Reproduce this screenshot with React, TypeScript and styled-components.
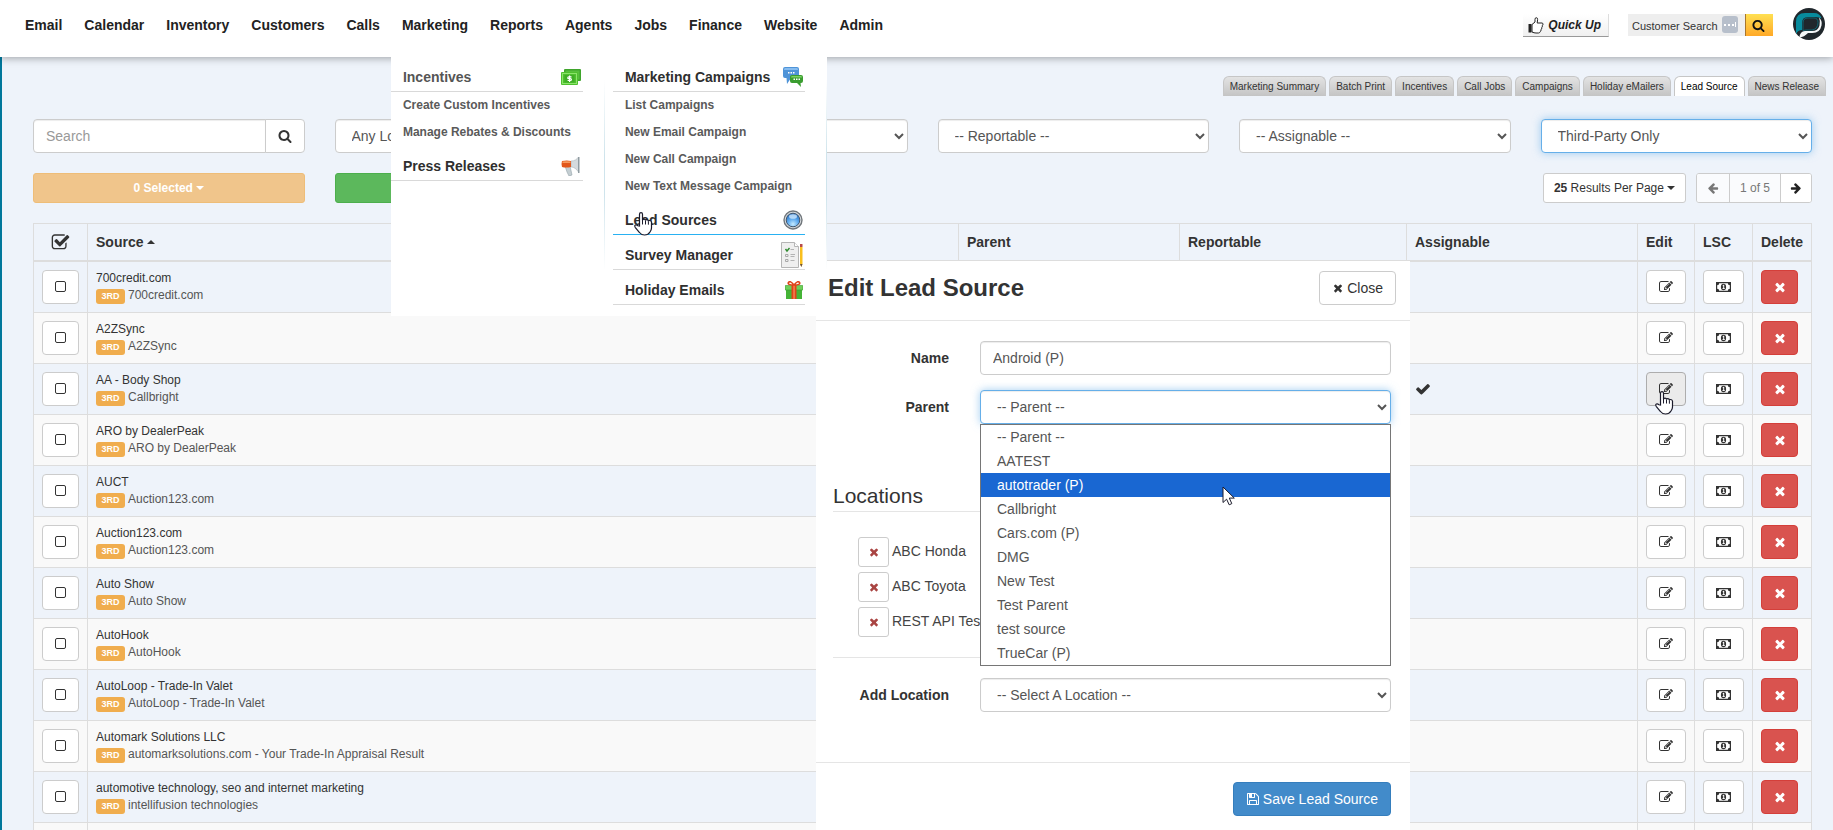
import React from "react";
import styled, { createGlobalStyle, css } from "styled-components";

const GlobalStyle = createGlobalStyle`
  *, *::before, *::after { box-sizing: border-box; }
  body {
    margin: 0;
    background: #eef3fa;
    color: #333;
    font: 14px/20px "Liberation Sans", Arial, Helvetica, sans-serif;
  }
  button, input, select { font: inherit; color: inherit; margin: 0; }
  a { color: inherit; text-decoration: none; }
`;

/* ---------- icons ---------- */

const paths = {
  times:
    "M1490 1322q0 40-28 68l-136 136q-28 28-68 28t-68-28l-294-294-294 294q-28 28-68 28t-68-28l-136-136q-28-28-28-68t28-68l294-294-294-294q-28-28-28-68t28-68l136-136q28-28 68-28t68 28l294 294 294-294q28-28 68-28t68 28l136 136q28 28 28 68t-28 68l-294 294 294 294q28 28 28 68z",
  check:
    "M1671 566q0 40-28 68l-724 724-136 136q-28 28-68 28t-68-28l-136-136-362-362q-28-28-28-68t28-68l136-136q28-28 68-28t68 28l294 295 656-657q28-28 68-28t68 28l136 136q28 28 28 68z",
  search:
    "M1216 832q0-185-131.5-316.5t-316.5-131.5-316.5 131.5-131.5 316.5 131.5 316.5 316.5 131.5 316.5-131.5 131.5-316.5zm512 832q0 52-38 90t-90 38q-54 0-90-38l-343-342q-179 124-399 124-143 0-273.5-55.5t-225-150-150-225-55.5-273.5 55.5-273.5 150-225 225-150 273.5-55.5 273.5 55.5 225 150 150 225 55.5 273.5q0 220-124 399l343 343q37 37 37 90z",
  arrow:
    "M1600 960q0 54-37 91l-651 651q-39 37-91 37-51 0-90-37l-75-75q-38-38-38-91t38-91l293-293h-704q-52 0-84.500-37.500t-32.500-90.500v-128q0-53 32.500-90.500t84.500-37.500h704l-293-294q-38-36-38-90t38-90l75-75q38-38 90-38 53 0 91 38l651 651q37 35 37 90z",
  save:
    "M512 1536h768v-384h-768v384zm896 0h128v-896q0-14-10-38.500t-20-34.500l-281-281q-10-10-34-20t-39-10v416q0 40-28 68t-68 28h-576q-40 0-68-28t-28-68v-416h-128v1280h128v-416q0-40 28-68t68-28h832q40 0 68 28t28 68v416zm-384-928v-320q0-13-9.500-22.500t-22.500-9.500h-192q-13 0-22.500 9.500t-9.500 22.500v320q0 13 9.500 22.500t22.500 9.500h192q13 0 22.500-9.500t9.500-22.500zm640 32v928q0 40-28 68t-68 28h-1344q-40 0-68-28t-28-68v-1344q0-40 28-68t68-28h928q40 0 88 20t76 48l280 280q28 28 48 76t20 88z",
  edit:
    "M888 1184l116-116-152-152-116 116v56h96v96h56zm440-720q-16-16-33 1l-350 350q-17 17-1 33t33-1l350-350q17-17 1-33zm80 594v190q0 119-84.500 203.500t-203.500 84.500h-832q-119 0-203.500-84.500t-84.500-203.500v-832q0-119 84.500-203.500t203.500-84.500h832q63 0 117 25 15 7 18 23 3 17-9 29l-49 49q-14 14-32 8-23-6-45-6h-832q-66 0-113 47t-47 113v832q0 66 47 113t113 47h832q66 0 113-47t47-113v-126q0-13 9-22l64-64q15-15 35-7t20 29zm-96-738l288 288-672 672h-288v-288zm444 132l-92 92-288-288 92-92q28-28 68-28t68 28l152 152q28 28 28 68t-28 68z",
  checkSquare:
    "M1472 930v318q0 119-84.500 203.500t-203.500 84.500h-832q-119 0-203.500-84.500t-84.500-203.500v-832q0-119 84.500-203.500t203.500-84.500h832q63 0 117 25 15 7 18 23 3 17-9 29l-49 49q-10 10-23 10-3 0-9-2-23-6-45-6h-832q-66 0-113 47t-47 113v832q0 66 47 113t113 47h832q66 0 113-47t47-113v-254q0-13 9-22l64-64q10-10 23-10 6 0 12 3 20 8 20 29zm231-489l-814 814q-24 24-57 24t-57-24l-430-430q-24-24-24-57t24-57l110-110q24-24 57-24t57 24l263 263 647-647q24-24 57-24t57 24l110 110q24 24 24 57t-24 57z",
};

const Svg = styled.svg`
  display: block;
  flex: none;
`;

const Icon = ({ name, size = 14, flip }: { name: keyof typeof paths; size?: number; flip?: boolean }) => (
  <Svg width={size} height={size} viewBox="0 0 1792 1792" fill="currentColor" aria-hidden="true">
    <path d={paths[name]} transform={flip ? "translate(1792 0) scale(-1 1)" : undefined} />
  </Svg>
);

const MoneyIcon = () => (
  <Svg width="15" height="10" viewBox="0 0 15 10" aria-hidden="true">
    <path
      fill="#333"
      fillRule="evenodd"
      d="M0 0h15v10H0zM3.200 1.200A2 2 0 0 1 1.200 3.200v3.600a2 2 0 0 1 2 2h8.600a2 2 0 0 1 2-2V3.200a2 2 0 0 1-2-2z"
    />
    <ellipse cx="7.500" cy="5" rx="2.600" ry="3.200" fill="#333" />
    <path d="M6.600 3.600l1-.9h.6v3.600h.7v.8H6.400v-.8h.8V4l-.4.300z" fill="#fff" />
  </Svg>
);

const CashIcon = () => (
  <Svg width="20" height="16" viewBox="0 0 20 16" aria-hidden="true">
    <rect x="3" y="0" width="17" height="12" rx="1" fill="#3fa52c" />
    <rect x="4.500" y="1.500" width="14" height="9" fill="#58bf3d" />
    <rect x="0" y="3" width="17" height="13" rx="1" fill="#4fc02f" />
    <rect x="1.500" y="4.500" width="14" height="10" fill="none" stroke="#8be46a" />
    <rect x="3.500" y="6" width="10" height="7.500" fill="#3fae26" />
    <path d="M10.500 7.900H7.700q-.9 0-.9.900t.9.900h1.800q.9 0 .9.900t-.9.900H6.600M8.600 6.500v6.500" fill="none" stroke="#fff" strokeWidth="1.200" />
  </Svg>
);

const MegaphoneIcon = () => (
  <Svg width="20" height="19" viewBox="0 0 20 19" aria-hidden="true">
    <path d="M4 9h5l2 9-3 1-2-4z" fill="#c4ced2" stroke="#94a3aa" strokeWidth=".6" />
    <path d="M10 4c4 0 6-2 7.500-4v15c-2-3-4.500-5-7.500-5z" fill="#d4dadd" stroke="#a1abb0" strokeWidth=".5" />
    <path d="M17 0h1.500v16H17z" fill="#8f9ba1" />
    <path d="M1 4q5-1 9 0v6q-5 1-9 0-1-3 0-6z" fill="#e2571b" />
    <path d="M1.500 4.600q4-.9 8 0v1.400h-8z" fill="#f59b60" />
  </Svg>
);

const ChatIcon = () => (
  <Svg width="20" height="20" viewBox="0 0 20 20" aria-hidden="true">
    <path d="M2 0h12q2 0 2 2v7q0 2-2 2H8l-4 6-.5-6H2q-2 0-2-2V2q0-2 2-2z" fill="#4f94d8" />
    <path d="M2 1h12q1 0 1 2H1q0-2 1-2z" fill="#86bcf0" />
    <path d="M5 5h1.500v1.500H5zm2.500 0H9v1.500H7.500zM10 5h1.500v1.500H10z" fill="#fff" />
    <path d="M9 8h9q2 0 2 2v4q0 2-2 2h-.5l.5 4-4-4H9q-2 0-2-2v-4q0-2 2-2z" fill="#3a9d30" />
    <path d="M9 9h9q1 0 1 1.500H8Q8 9 9 9z" fill="#7bd264" />
    <path d="M10.500 11.500H12V13h-1.500zm2.500 0h1.500V13H13zm2.500 0H17V13h-1.500z" fill="#fff" />
  </Svg>
);

const OrbIcon = () => (
  <Svg width="20" height="20" viewBox="0 0 20 20" aria-hidden="true">
    <defs>
      <radialGradient id="orb" cx="50%" cy="80%" r="80%">
        <stop offset="0" stopColor="#c4eaff" />
        <stop offset=".5" stopColor="#5ba8ee" />
        <stop offset="1" stopColor="#2468b8" />
      </radialGradient>
    </defs>
    <circle cx="10" cy="10" r="9" fill="#d9dde0" stroke="#70767b" strokeWidth="1.400" />
    <circle cx="10" cy="10" r="6.800" fill="url(#orb)" stroke="#41566c" />
    <ellipse cx="10" cy="6.500" rx="4" ry="2.300" fill="#d7edff" opacity=".75" />
  </Svg>
);

const SurveyIcon = () => (
  <Svg width="22" height="26" viewBox="0 0 22 26" aria-hidden="true">
    <path d="M.5.500h13l4 4v21H.5z" fill="#efefef" stroke="#b5b5b5" />
    <path d="M13.500.500v4h4" fill="#fff" stroke="#b5b5b5" />
    <path d="M4.500 7l1.500 2 2.500-3" fill="none" stroke="#2f8a2f" strokeWidth="1.400" />
    <path d="M9.500 7.500h3.500M9.500 12.500h4.500M9.500 14.500h4M9.500 18.500h4" stroke="#b3b3b3" />
    <path d="M4.500 12.500h2.500v2H4.500zm0 5h2.500v2H4.500z" fill="none" stroke="#a8a8a8" />
    <path d="M19 5h2.500v17l-1.200 3L19 22z" fill="#f9bf1e" />
    <path d="M19 2h2.500v3H19z" fill="#b74a4a" />
    <path d="M19 22h2.500l-1.200 3z" fill="#6a5140" />
  </Svg>
);

const GiftIcon = () => (
  <Svg width="18" height="18" viewBox="0 0 18 18" aria-hidden="true">
    <rect x="1" y="8" width="16" height="10" fill="#45b437" />
    <rect x="0" y="4.500" width="18" height="4.500" rx=".5" fill="#6fcf5a" stroke="#3a9a30" strokeWidth=".6" />
    <rect x="6.500" y="4" width="5" height="14" fill="#e0431a" />
    <rect x="8.300" y="4" width="1.500" height="14" fill="#f5824f" />
    <path d="M9 4Q5-1 3.500 1.500T9 4q4-5 5.500-2.500T9 4z" fill="none" stroke="#e0431a" strokeWidth="1.600" />
  </Svg>
);

const ThumbIcon = () => (
  <Svg width="16" height="17" viewBox="0 0 16 17" aria-hidden="true">
    <path d="M.5 7h3v8.500h-3z" fill="#222" />
    <path
      d="M4 7.500L7 5V2.500Q7 .7 8.300.7T9.600 2.500L9.200 6H14q1 0 1 1.200t-.8 1.300q.5 1.800-.5 2.200.3 1.500-.7 2 .2 1.600-.8 1.900-.4 1.400-1.700 1.400H8q-2 0-4-1z"
      fill="#fff"
      stroke="#222"
    />
  </Svg>
);

const BrandMark = () => (
  <Svg width="32" height="32" viewBox="0 0 32 32" role="img" aria-label="Account">
    <circle cx="16" cy="16" r="16" fill="#20272c" />
    <path d="M3 26V13.500Q3 5 12 5h9q6 0 7.500 5.500-2-1.500-6-1.500H15q-6 0-6 6v7q-4 0-6 4z" fill="#078b9d" />
    <path d="M26 9.500q3.500 3 2.500 8-1.500 7.500-9 7.500H15q-4 4-8.500 4.500Q7 23 12 23h7q6 0 7.500-5.500Q27.500 13 26 9.500z" fill="#f4f7f8" />
    <path d="M10 22.500V15q0-5 5-5h6q4 0 4 4.500Q25 21 19 22h-6z" fill="#20272c" stroke="#078b9d" strokeWidth=".6" />
  </Svg>
);

const HandSvg = styled.svg<{ $left: number; $top: number }>`
  position: absolute;
  left: ${(p) => p.$left}px;
  top: ${(p) => p.$top}px;
  pointer-events: none;
`;

const HandCursor = ({ left, top }: { left: number; top: number }) => (
  <HandSvg $left={left} $top={top} width="19" height="24" viewBox="0 0 19 24" aria-hidden="true">
    <path
      d="M5.500 14V2.300q0-1.600 1.500-1.600t1.500 1.600V8.200q0-1 1.500-1t1.500 1.300q0-.8 1.400-.8t1.500 1.500q0-.7 1.300-.7t1.800 1.700V16q0 2-1.500 4-1.800 3-5.500 3-3.200 0-5-2.500L1.200 15.300q-1-1.700.2-2.300t2.600.8z"
      fill="#fff"
      stroke="#1b1b2b"
      strokeWidth="1.200"
    />
    <path d="M8.500 8v4.500M11.500 8.500v4M14.400 9.200v3.500" stroke="#1b1b2b" fill="none" />
  </HandSvg>
);

const PointerSvg = styled.svg`
  position: absolute;
  left: 241px;
  top: 13px;
  z-index: 1;
  pointer-events: none;
`;

/* ---------- header ---------- */

const Page = styled.div`
  position: relative;
  display: flex;
  flex-direction: column;
  height: 100vh;
  overflow: hidden;
`;

const Header = styled.header`
  position: relative;
  z-index: 3;
  display: flex;
  flex: none;
  justify-content: space-between;
  height: 57px;
  padding: 0 8px 0 25px;
  background: #fff;
  box-shadow: 0 1px 8px rgba(0, 0, 0, 0.35);
`;

const NavList = styled.ul`
  display: flex;
  gap: 22px;
  margin: 0;
  padding: 0;
  list-style: none;
  font-weight: bold;
  color: #222;
`;

const NavItem = styled.li`
  position: relative;
  padding-top: 15px;
`;

const HeaderTools = styled.div`
  display: flex;
  align-items: flex-start;
  padding-top: 8px;
`;

const QuickUp = styled.button`
  display: flex;
  align-items: center;
  gap: 4px;
  height: 23px;
  margin: 6px 19px 0 0;
  padding: 0 7px 0 5px;
  border: 0;
  border-bottom: 1px solid #999;
  border-right: 1px solid #ddd;
  background: linear-gradient(#fff, #f0f0f0);
  color: #222;
  font-size: 12px;
  font-weight: bold;
  font-style: italic;
`;

const CustomerSearch = styled.form`
  display: flex;
  height: 22px;
  margin: 6px 20px 0 0;
  background: #eee;
`;

const CustomerInput = styled.input`
  width: 94px;
  padding: 2px 0 0 4px;
  border: 0;
  background: none;
  font-size: 11px;
  &::placeholder { color: #333; opacity: 1; }
`;

const FillBadge = styled.span`
  display: flex;
  align-items: center;
  justify-content: center;
  width: 16px;
  height: 17px;
  margin: 2px 7px 0 0;
  border-radius: 3px;
  background: #b7bfcb;
`;

const YellowButton = styled.button`
  display: flex;
  align-items: center;
  justify-content: center;
  width: 28px;
  padding: 0 2px 0 0;
  border: 0;
  border-left: 1px solid #a8762c;
  background: linear-gradient(#ffe052, #ffa928);
  color: #111;
`;

/* ---------- mega menu ---------- */

const MegaMenu = styled.div`
  position: absolute;
  top: 57px;
  left: -11px;
  display: flex;
  align-items: flex-start;
  height: 259px;
  background: #fff;
`;

const MenuColumn = styled.div`
  flex: none;
  width: 192px;
`;

const MenuRule = styled.i`
  flex: none;
  width: 1px;
  height: 190px;
  margin: 23px 0 0 21px;
  background: linear-gradient(#fff, #cfe4ec 40%, #cfe4ec 60%, #fff);
  & + ${MenuColumn} { margin-left: 8px; }
`;

const MenuHeading = styled.a<{ $active?: boolean; $muted?: boolean }>`
  position: relative;
  display: flex;
  align-items: center;
  justify-content: space-between;
  height: 35px;
  padding: 6px 2px 0 12px;
  border-bottom: 1px solid ${(p) => (p.$active ? "#29b1f2" : "#d9d9d9")};
  color: ${(p) => (p.$muted ? "#555" : "#2f2f2f")};
`;

const MenuLink = styled.a`
  display: block;
  padding-left: 12px;
  color: #5a5a5a;
  font-size: 12px;
  line-height: 27px;
`;

/* ---------- controls ---------- */

const fieldBase = css<{ $focused?: boolean }>`
  width: 100%;
  height: 34px;
  padding: 6px 12px;
  border: 1px solid ${(p) => (p.$focused ? "#66afe9" : "#ccc")};
  border-radius: 4px;
  outline: none;
  background-color: #fff;
  color: #555;
  box-shadow: inset 0 1px 1px rgba(0, 0, 0, 0.075)
    ${(p) => (p.$focused ? ", 0 0 8px rgba(102, 175, 233, 0.6)" : "")};
`;

const TextField = styled.input<{ $focused?: boolean }>`
  ${fieldBase}
  &::placeholder { color: #999; opacity: 1; }
`;

const SelectField = styled.select<{ $focused?: boolean }>`
  ${fieldBase}
`;

const tones = {
  plain: css`background: #fff; border-color: #ccc; color: #333;`,
  pressed: css`background: #ebebeb; border-color: #adadad; color: #333;`,
  danger: css`background: #d9534f; border-color: #d43f3a; color: #fff;`,
  primary: css`background: #428bca; border-color: #357ebd; color: #fff;`,
  success: css`background: #5cb85c; border-color: #4cae4c; color: #fff;`,
  faded: css`background: #f0c58b; border-color: #eebd78; color: #fff;`,
};

const Button = styled.button<{ $tone?: keyof typeof tones; $small?: boolean; $width?: number }>`
  position: relative;
  display: flex;
  flex: none;
  align-items: center;
  justify-content: center;
  gap: 3px;
  width: ${(p) => (p.$width ? `${p.$width}px` : "auto")};
  height: ${(p) => (p.$small ? 30 : 34)}px;
  padding: 0 ${(p) => (p.$width ? 0 : p.$small ? 10 : 12)}px;
  border: 1px solid;
  border-radius: ${(p) => (p.$small ? 3 : 4)}px;
  font-size: ${(p) => (p.$small ? 12 : 14)}px;
  white-space: nowrap;
  ${(p) => tones[p.$tone ?? "plain"]}
`;

const Caret = styled.i<{ $up?: boolean }>`
  border: 4px solid transparent;
  ${(p) =>
    p.$up
      ? "border-top: 0; border-bottom-color: currentColor;"
      : "border-bottom: 0; border-top-color: currentColor;"}
`;

/* ---------- main area ---------- */

const Main = styled.main`
  flex: 1;
  padding-top: 19px;
  border-left: 2px solid #00779b;
`;

const Tabs = styled.nav`
  display: flex;
  justify-content: flex-end;
  gap: 3px;
  padding-right: 7px;
`;

const Tab = styled.a<{ $active?: boolean }>`
  height: 20px;
  padding: 0 6px;
  border: 1px solid #c6c6c6;
  border-bottom: 0;
  border-radius: 6px 6px 0 0;
  background: ${(p) => (p.$active ? "#fff" : "linear-gradient(#e3e3e3, #c4c4c4)")};
  color: ${(p) => (p.$active ? "#000" : "#333")};
  font-size: 10px;
  line-height: 20px;
`;

const Content = styled.div`
  display: flex;
  flex-direction: column;
  gap: 20px;
  padding: 23px 21px 0 31px;
`;

const Columns = styled.div`
  display: grid;
  grid-template-columns: repeat(6, 1fr);
  column-gap: 30px;
`;

const SearchGroup = styled.form`
  display: flex;
  input { border-radius: 4px 0 0 4px; }
  button { margin-left: -1px; border-radius: 0 4px 4px 0; }
`;

const Paging = styled.div`
  grid-column: 3 / -1;
  display: flex;
  justify-content: flex-end;
  gap: 10px;
`;

const Pager = styled.div`
  display: flex;
  border: 1px solid #ccc;
  border-radius: 3px;
  background: #fff;
  overflow: hidden;
  font-size: 12px;
`;

const PagerStep = styled.button<{ $muted?: boolean }>`
  display: flex;
  align-items: center;
  justify-content: center;
  width: ${(p) => (p.$muted ? 32 : 30)}px;
  padding: 0;
  border: 0;
  background: ${(p) => (p.$muted ? "#fafbfd" : "#fff")};
  color: ${(p) => (p.$muted ? "#777" : "#222")};
`;

const PagerCount = styled.span`
  padding: 0 10px;
  border: solid #ccc;
  border-width: 0 1px;
  background: #fafbfd;
  color: #777;
  line-height: 28px;
`;

const Table = styled.table`
  width: 100%;
  table-layout: fixed;
  border-spacing: 0;
  border-top: 1px solid #ddd;
  border-left: 1px solid #ddd;
`;

const Th = styled.th<{ $width?: number }>`
  width: ${(p) => (p.$width ? `${p.$width}px` : "auto")};
  height: 38px;
  padding: 0 8px;
  border-right: 1px solid #ddd;
  border-bottom: 2px solid #ddd;
  text-align: left;
  white-space: nowrap;
`;

const HeadLabel = styled.span<{ $center?: boolean }>`
  display: flex;
  align-items: center;
  justify-content: ${(p) => (p.$center ? "center" : "flex-start")};
  gap: 4px;
`;

const Tr = styled.tr`
  height: 51px;
  &:nth-child(even) { background: #f9f9f9; }
`;

const Td = styled.td`
  padding: 8px;
  border-right: 1px solid #ddd;
  border-bottom: 1px solid #ddd;
  font-size: 12px;
  line-height: 17px;
  vertical-align: top;
`;

const TickBox = styled.label`
  display: flex;
  align-items: center;
  justify-content: center;
  width: 37px;
  height: 34px;
  padding-bottom: 1px;
  border: 1px solid #ccc;
  border-radius: 4px;
  background: #fff;
`;

const Tick = styled.input`
  appearance: none;
  width: 11px;
  height: 11px;
  border: 1px solid #333;
  border-radius: 2px;
`;

const SourceName = styled.a`
  display: block;
  color: #333;
`;

const SourceAlias = styled.div`
  display: flex;
  gap: 3px;
  color: #555;
  white-space: nowrap;
`;

const PartyBadge = styled.span`
  align-self: flex-end;
  width: 29px;
  height: 15px;
  border-radius: 3px;
  background: #f0ad4e;
  color: #fff;
  font-size: 9px;
  font-weight: bold;
  line-height: 14px;
  text-align: center;
`;

const CheckCell = styled.span`
  display: flex;
  align-items: center;
  height: 34px;
`;

/* ---------- dialog ---------- */

const Dialog = styled.section`
  position: absolute;
  z-index: 2;
  top: 261px;
  bottom: 0;
  left: 816px;
  width: 594px;
  background: #fff;
`;

const DialogHeader = styled.header`
  display: flex;
  justify-content: space-between;
  padding: 10px 14px 15px 12px;
  border-bottom: 1px solid #e5e5e5;
`;

const DialogTitle = styled.h2`
  margin: 0;
  font-size: 24px;
  line-height: 34px;
`;

const DialogBody = styled.div`
  display: flex;
  flex-direction: column;
  gap: 15px;
  padding: 20px 19px 50px 17px;
`;

const FormRow = styled.div`
  display: grid;
  grid-template-columns: 116px 1fr;
  column-gap: 31px;
  align-items: center;
`;

const FormLabel = styled.label`
  font-weight: bold;
  text-align: right;
`;

const Control = styled.div`
  position: relative;
`;

const Options = styled.ul`
  position: absolute;
  z-index: 1;
  top: 34px;
  left: 0;
  right: 0;
  margin: 0;
  padding: 0;
  border: 1px solid #767676;
  background: #fff;
  list-style: none;
`;

const Option = styled.li<{ $active?: boolean }>`
  position: relative;
  padding: 0 16px;
  background: ${(p) => (p.$active ? "#1967d2" : "#fff")};
  color: ${(p) => (p.$active ? "#fff" : "#555")};
  line-height: 24px;
`;

const Locations = styled.fieldset`
  margin: 42px 0 5px;
  padding: 0 0 20px;
  border: 0;
  border-bottom: 1px solid #e5e5e5;
`;

const Legend = styled.legend`
  width: 100%;
  padding: 0;
  border-bottom: 1px solid #e5e5e5;
  font-size: 21px;
  line-height: 30px;
`;

const LocationList = styled.ul`
  display: flex;
  flex-direction: column;
  gap: 5px;
  margin: 25px 0 0 25px;
  padding: 0;
  list-style: none;
`;

const LocationItem = styled.li`
  display: flex;
  gap: 3px;
  line-height: 28px;
  color: #444;
`;

const RemoveMark = styled.span`
  color: #a94442;
`;

const DialogFooter = styled.footer`
  display: flex;
  justify-content: flex-end;
  padding: 19px 19px 14px;
  border-top: 1px solid #e5e5e5;
`;

/* ---------- data ---------- */

const nav = ["Email", "Calendar", "Inventory", "Customers", "Calls", "Marketing", "Reports", "Agents", "Jobs", "Finance", "Website", "Admin"];

const tabs = ["Marketing Summary", "Batch Print", "Incentives", "Call Jobs", "Campaigns", "Holiday eMailers", "Lead Source", "News Release"];

const sources: [string, string][] = [
  ["700credit.com", "700credit.com"],
  ["A2ZSync", "A2ZSync"],
  ["AA - Body Shop", "Callbright"],
  ["ARO by DealerPeak", "ARO by DealerPeak"],
  ["AUCT", "Auction123.com"],
  ["Auction123.com", "Auction123.com"],
  ["Auto Show", "Auto Show"],
  ["AutoHook", "AutoHook"],
  ["AutoLoop - Trade-In Valet", "AutoLoop - Trade-In Valet"],
  ["Automark Solutions LLC", "automarksolutions.com - Your Trade-In Appraisal Result"],
  ["automotive technology, seo and internet marketing", "intellifusion technologies"],
];

const parents = ["-- Parent --", "AATEST", "autotrader (P)", "Callbright", "Cars.com (P)", "DMG", "New Test", "Test Parent", "test source", "TrueCar (P)"];

const locations = ["ABC Honda", "ABC Toyota", "REST API Test"];

const MarketingMenu = () => (
  <MegaMenu>
    <MenuColumn>
      <MenuHeading href="#" $muted>Incentives<CashIcon /></MenuHeading>
      <MenuLink href="#">Create Custom Incentives</MenuLink>
      <MenuLink href="#">Manage Rebates &amp; Discounts</MenuLink>
      <MenuHeading href="#">Press Releases<MegaphoneIcon /></MenuHeading>
    </MenuColumn>
    <MenuRule />
    <MenuColumn>
      <MenuHeading href="#">Marketing Campaigns<ChatIcon /></MenuHeading>
      <MenuLink href="#">List Campaigns</MenuLink>
      <MenuLink href="#">New Email Campaign</MenuLink>
      <MenuLink href="#">New Call Campaign</MenuLink>
      <MenuLink href="#">New Text Message Campaign</MenuLink>
      <MenuHeading href="#" $active>
        Lead Sources<OrbIcon />
        <HandCursor left={21} top={12} />
      </MenuHeading>
      <MenuHeading href="#">Survey Manager<SurveyIcon /></MenuHeading>
      <MenuHeading href="#">Holiday Emails<GiftIcon /></MenuHeading>
    </MenuColumn>
    <MenuRule />
  </MegaMenu>
);

const EditDialog = () => (
  <Dialog role="dialog" aria-labelledby="dialog-title">
    <DialogHeader>
      <DialogTitle id="dialog-title">Edit Lead Source</DialogTitle>
      <Button type="button"><Icon name="times" size={12} />Close</Button>
    </DialogHeader>
    <DialogBody>
      <FormRow>
        <FormLabel htmlFor="name">Name</FormLabel>
        <TextField id="name" defaultValue="Android (P)" />
      </FormRow>
      <FormRow>
        <FormLabel htmlFor="parent">Parent</FormLabel>
        <Control>
          <SelectField id="parent" $focused>
            <option>-- Parent --</option>
          </SelectField>
          <Options role="listbox" aria-label="Parent">
            {parents.map((name) => {
              const active = name === "autotrader (P)";
              return (
                <Option key={name} role="option" aria-selected={active} $active={active}>
                  {name}
                  {active && (
                    <PointerSvg width="14" height="20" viewBox="0 0 14 20" aria-hidden="true">
                      <path d="M1 1v15.500l3.600-3.300 2.600 5.600 2.600-1.200-2.500-5.500h5z" fill="#fff" stroke="#1b1b2b" />
                    </PointerSvg>
                  )}
                </Option>
              );
            })}
          </Options>
        </Control>
      </FormRow>
      <Locations>
        <Legend>Locations</Legend>
        <LocationList>
          {locations.map((name) => (
            <LocationItem key={name}>
              <Button type="button" $small $width={31} aria-label={`Remove ${name}`}>
                <RemoveMark><Icon name="times" size={12} /></RemoveMark>
              </Button>
              {name}
            </LocationItem>
          ))}
        </LocationList>
      </Locations>
      <FormRow>
        <FormLabel htmlFor="location">Add Location</FormLabel>
        <SelectField id="location"><option>-- Select A Location --</option></SelectField>
      </FormRow>
    </DialogBody>
    <DialogFooter>
      <Button type="button" $tone="primary"><Icon name="save" />Save Lead Source</Button>
    </DialogFooter>
  </Dialog>
);

export default function App() {
  return (
    <Page>
      <GlobalStyle />
      <Header>
        <nav>
          <NavList>
            {nav.map((label) => (
              <NavItem key={label}>
                <a href="#">{label}</a>
                {label === "Marketing" && <MarketingMenu />}
              </NavItem>
            ))}
          </NavList>
        </nav>
        <HeaderTools>
          <QuickUp type="button"><ThumbIcon />Quick Up</QuickUp>
          <CustomerSearch>
            <CustomerInput placeholder="Customer Search" aria-label="Customer Search" />
            <FillBadge>
              <Svg width="14" height="7" viewBox="0 0 14 7" aria-hidden="true">
                <path d="M1 3h2v2H1zm4 0h2v2H5zm4 0h2v2H9zm3-2h1v5h-1z" fill="#fff" />
              </Svg>
            </FillBadge>
            <YellowButton type="button" aria-label="Search customers"><Icon name="search" size={13} /></YellowButton>
          </CustomerSearch>
          <BrandMark />
        </HeaderTools>
      </Header>

      <Main>
        <Tabs>
          {tabs.map((label) => (
            <Tab key={label} href="#" $active={label === "Lead Source"}>{label}</Tab>
          ))}
        </Tabs>
        <Content>
          <Columns>
            <SearchGroup>
              <TextField placeholder="Search" aria-label="Search" />
              <Button type="button" $width={40} aria-label="Run search"><Icon name="search" /></Button>
            </SearchGroup>
            <SelectField aria-label="Location"><option>Any Location</option></SelectField>
            <SelectField aria-label="Status"><option></option></SelectField>
            <SelectField aria-label="Reportable"><option>-- Reportable --</option></SelectField>
            <SelectField aria-label="Assignable"><option>-- Assignable --</option></SelectField>
            <SelectField aria-label="Third party" $focused><option>Third-Party Only</option></SelectField>
          </Columns>
          <Columns>
            <Button type="button" $small $tone="faded"><b>0 Selected</b><Caret /></Button>
            <Button type="button" $small $tone="success" aria-label="Add" />
            <Paging>
              <Button type="button" $small><span><b>25</b> Results Per Page</span><Caret /></Button>
              <Pager>
                <PagerStep type="button" $muted aria-label="Previous page"><Icon name="arrow" size={12} flip /></PagerStep>
                <PagerCount>1 of 5</PagerCount>
                <PagerStep type="button" aria-label="Next page"><Icon name="arrow" size={12} /></PagerStep>
              </Pager>
            </Paging>
          </Columns>
          <Table>
            <thead>
              <tr>
                <Th $width={54}><HeadLabel $center><Icon name="checkSquare" size={19} /></HeadLabel></Th>
                <Th><HeadLabel>Source<Caret $up /></HeadLabel></Th>
                <Th $width={221}>Parent</Th>
                <Th $width={227}>Reportable</Th>
                <Th $width={231}>Assignable</Th>
                <Th $width={57}>Edit</Th>
                <Th $width={58}>LSC</Th>
                <Th $width={59}>Delete</Th>
              </tr>
            </thead>
            <tbody>
              {sources.map(([name, alias], i) => (
                <Tr key={name}>
                  <Td><TickBox><Tick type="checkbox" aria-label={name} /></TickBox></Td>
                  <Td>
                    <SourceName href="#">{name}</SourceName>
                    <SourceAlias><PartyBadge>3RD</PartyBadge>{alias}</SourceAlias>
                  </Td>
                  <Td />
                  <Td />
                  <Td>{i === 2 && <CheckCell><Icon name="check" size={16} /></CheckCell>}</Td>
                  <Td>
                    <Button type="button" $width={40} $tone={i === 2 ? "pressed" : "plain"} aria-label={`Edit ${name}`}>
                      <Icon name="edit" />
                      {i === 2 && <HandCursor left={8} top={18} />}
                    </Button>
                  </Td>
                  <Td><Button type="button" $width={41} aria-label={`LSC ${name}`}><MoneyIcon /></Button></Td>
                  <Td><Button type="button" $width={37} $tone="danger" aria-label={`Delete ${name}`}><Icon name="times" /></Button></Td>
                </Tr>
              ))}
              <Tr><Td /><Td /><Td /><Td /><Td /><Td /><Td /><Td /></Tr>
            </tbody>
          </Table>
        </Content>
      </Main>
      <EditDialog />
    </Page>
  );
}
